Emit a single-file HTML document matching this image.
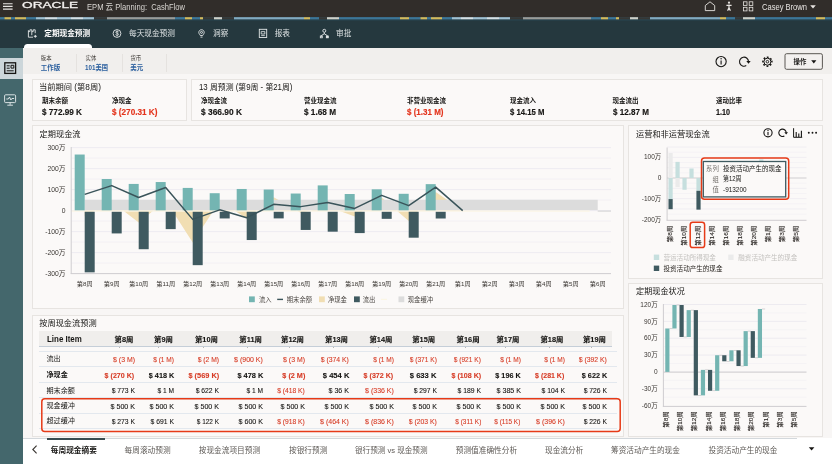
<!DOCTYPE html>
<html lang="zh-CN">
<head>
<meta charset="utf-8">
<title>EPM 云 Planning: CashFlow</title>
<style>
*{box-sizing:border-box;margin:0;padding:0}
html,body{width:832px;height:464px;overflow:hidden;background:#f8f6f5}
body{font-family:"Liberation Sans","Noto Sans CJK SC",sans-serif;color:#161513}
#root{position:relative;width:832px;height:464px;overflow:hidden;background:#f8f6f5;will-change:transform}
.abs{position:absolute}
.t{position:absolute;white-space:nowrap;line-height:1}
svg{position:absolute;left:0;top:0;overflow:visible}
svg text{font-family:"Liberation Sans","Noto Sans CJK SC",sans-serif}
.card{position:absolute;background:#fbf9f8;border:1px solid #e7e4e1}

</style>
</head>
<body>
<div id="root">
<div class="abs" style="left:0;top:0;width:832px;height:18px;background:#312d2a"></div>
<div class="abs" style="left:0;top:20px;width:832px;height:28px;background:#25383e"></div>
<div class="abs" style="left:0;top:47.500px;width:832px;height:26.800px;background:#f1efed"></div>
<div class="abs" style="left:0;top:47.500px;width:23.100px;height:416.500px;background:#44676c"></div>
<div class="abs" style="left:0;top:58px;width:23.100px;height:21.200px;background:#ccd6da"></div>
<div class="abs" style="left:23.700px;top:43.600px;width:68.400px;height:4.200px;background:#fff;border-radius:3.500px 3.500px 0 0"></div>
<svg width="832" height="464" viewBox="0 0 832 464"><rect x="0" y="17.100" width="832" height="3.200" fill="#2f5566"/><g opacity=".88"><rect x="0" y="17.200" width="4.5" height="2.300" fill="#3f7b9f"/><rect x="4.5" y="17.200" width="6.5" height="2.300" fill="#ecc85a"/><rect x="11" y="17.200" width="4" height="2.300" fill="#3f7b9f"/><rect x="15" y="17.200" width="11" height="2.300" fill="#ecc85a"/><rect x="26" y="17.200" width="10" height="2.300" fill="#3f7b9f"/><rect x="36" y="17.200" width="9" height="2.300" fill="#b2d0e2"/><rect x="45" y="17.200" width="12" height="2.300" fill="#eef3f6"/><rect x="57" y="17.200" width="14" height="2.300" fill="#b2d0e2"/><rect x="71" y="17.200" width="12" height="2.300" fill="#eef3f6"/><rect x="83" y="17.200" width="11" height="2.300" fill="#b2d0e2"/><rect x="94" y="17.200" width="13" height="2.300" fill="#37332f"/><rect x="107" y="17.200" width="68" height="2.300" fill="#aba6a0"/><rect x="175" y="17.200" width="10" height="2.300" fill="#3f7b9f"/><rect x="185" y="17.200" width="7" height="2.300" fill="#ecc85a"/><rect x="192" y="17.200" width="8" height="2.300" fill="#3f7b9f"/><rect x="200" y="17.200" width="3" height="2.300" fill="#ecc85a"/><rect x="203" y="17.200" width="11" height="2.300" fill="#37332f"/><rect x="214" y="17.200" width="8" height="2.300" fill="#e6e1d6"/><rect x="222" y="17.200" width="12" height="2.300" fill="#37332f"/><rect x="234" y="17.200" width="70" height="2.300" fill="#8fb6cd"/><rect x="304" y="17.200" width="6" height="2.300" fill="#ecc85a"/><rect x="310" y="17.200" width="9" height="2.300" fill="#3f7b9f"/><rect x="319" y="17.200" width="8" height="2.300" fill="#37332f"/><rect x="327" y="17.200" width="12" height="2.300" fill="#e6e1d6"/><rect x="339" y="17.200" width="61" height="2.300" fill="#3f7b9f"/><rect x="400" y="17.200" width="9" height="2.300" fill="#ecc85a"/><rect x="409" y="17.200" width="7" height="2.300" fill="#3f7b9f"/><rect x="416" y="17.200" width="4.5" height="2.300" fill="#3f7b9f"/><rect x="420.5" y="17.200" width="6.5" height="2.300" fill="#ecc85a"/><rect x="427" y="17.200" width="4" height="2.300" fill="#3f7b9f"/><rect x="431" y="17.200" width="11" height="2.300" fill="#ecc85a"/><rect x="442" y="17.200" width="10" height="2.300" fill="#3f7b9f"/><rect x="452" y="17.200" width="9" height="2.300" fill="#b2d0e2"/><rect x="461" y="17.200" width="12" height="2.300" fill="#eef3f6"/><rect x="473" y="17.200" width="14" height="2.300" fill="#b2d0e2"/><rect x="487" y="17.200" width="12" height="2.300" fill="#eef3f6"/><rect x="499" y="17.200" width="11" height="2.300" fill="#b2d0e2"/><rect x="510" y="17.200" width="13" height="2.300" fill="#37332f"/><rect x="523" y="17.200" width="68" height="2.300" fill="#aba6a0"/><rect x="591" y="17.200" width="10" height="2.300" fill="#3f7b9f"/><rect x="601" y="17.200" width="7" height="2.300" fill="#ecc85a"/><rect x="608" y="17.200" width="8" height="2.300" fill="#3f7b9f"/><rect x="616" y="17.200" width="3" height="2.300" fill="#ecc85a"/><rect x="619" y="17.200" width="11" height="2.300" fill="#37332f"/><rect x="630" y="17.200" width="8" height="2.300" fill="#e6e1d6"/><rect x="638" y="17.200" width="12" height="2.300" fill="#37332f"/><rect x="650" y="17.200" width="70" height="2.300" fill="#8fb6cd"/><rect x="720" y="17.200" width="6" height="2.300" fill="#ecc85a"/><rect x="726" y="17.200" width="9" height="2.300" fill="#3f7b9f"/><rect x="735" y="17.200" width="8" height="2.300" fill="#37332f"/><rect x="743" y="17.200" width="12" height="2.300" fill="#e6e1d6"/><rect x="755" y="17.200" width="61" height="2.300" fill="#3f7b9f"/><rect x="816" y="17.200" width="9" height="2.300" fill="#ecc85a"/><rect x="825" y="17.200" width="7" height="2.300" fill="#3f7b9f"/></g><rect x="0" y="19.300" width="832" height="1" fill="#25383e" opacity=".5"/></svg>
<div class="t" style="font-size:9.3px;top:1.15px;color:#f4f2f0;left:21.60px;transform:scaleX(1.470);transform-origin:0 50%;-webkit-text-stroke:.3px #f4f2f0;">ORACLE</div>
<div class="t" style="font-size:8.8px;top:3.00px;color:#d8d5d1;left:87.00px;transform:scaleX(0.864);transform-origin:0 50%;">EPM 云 Planning:&nbsp; CashFlow</div>
<div class="t" style="font-size:8.6px;top:2.60px;color:#e8e5e2;left:762.00px;transform:scaleX(0.880);transform-origin:0 50%;">Casey Brown</div>
<svg width="832" height="464" viewBox="0 0 832 464" fill="none" stroke="#e8e5e2" stroke-width="1">
  <path d="M3 3.700h9.600M3 6.400h9.600M3 9.100h9.600" stroke-width="1.100"/>
  <path d="M705.300 10.600V5.500l4.700-3.700 4.700 3.700v5.100z" stroke-width=".9"/>
  <circle cx="729" cy="2.700" r="1.100" fill="#e8e5e2" stroke="none"/>
  <path d="M726.400 5.300h5.200M729 4.600v3M727.600 10.700l1.400-3.200 1.400 3.200" stroke-width="1.200"/>
  <rect x="743.400" y="1.800" width="3.600" height="3.600" stroke-width=".8"/><rect x="749.200" y="1.800" width="3.600" height="3.600" stroke-width=".8"/>
  <rect x="743.400" y="7.300" width="3.600" height="3.600" stroke-width=".8"/><rect x="749.200" y="7.300" width="3.600" height="3.600" stroke-width=".8"/>
  <path d="M810.200 5.300h5.600l-2.800 3.200z" fill="#e8e5e2" stroke="none"/>
</svg>
<div class="t" style="font-size:7.65px;top:30.28px;font-weight:bold;color:#fff;left:44.30px;">定期现金预测</div>
<div class="t" style="font-size:7.65px;top:30.28px;color:#dde2e3;left:129.00px;">每天现金预测</div>
<div class="t" style="font-size:7.65px;top:30.28px;color:#dde2e3;left:213.10px;">洞察</div>
<div class="t" style="font-size:7.65px;top:30.28px;color:#dde2e3;left:274.70px;">报表</div>
<div class="t" style="font-size:7.65px;top:30.28px;color:#dde2e3;left:336.00px;">审批</div>
<svg width="832" height="464" viewBox="0 0 832 464" fill="none" stroke="#e4e8e9" stroke-width=".9">
  <path d="M28.400 30.200v7h4.600M28.400 31.600h1.500v-1.800h1.900v5.400M31.800 31.600h1.400v-1.800h2v3.400" />
  <path d="M33.800 36.300h3M35.300 34.900v2.800" stroke-width="1"/>
  <circle cx="117" cy="33.500" r="3.900"/>
  <path d="M118.600 32c-.4-.9-2.800-1-2.900.2s2.900.8 2.900 2.100-2.600 1.300-3.100.2M117.100 30.500v5.800" stroke-width=".8"/>
  <path d="M201.500 29.700c-1.500 0-2.700 1.200-2.700 2.700 0 1.300 1 2 1.500 3.100h2.400c.5-1.100 1.500-1.800 1.500-3.100 0-1.500-1.200-2.700-2.700-2.700zM200.500 37.100h2"/>
  <circle cx="201.500" cy="32.400" r="1"/>
  <rect x="259.300" y="29.300" width="7.400" height="8.200"/>
  <path d="M261.200 31.600h3.600v2.400h-3.600zM261.200 35.600h3.600" stroke-width=".8"/>
  <circle cx="324.300" cy="30.800" r="1.500"/>
  <path d="M324.300 32.400v1.600M321.300 37.200v-1.600l3-1.800 3 1.800v1.600"/>
  <rect x="320.300" y="36" width="2" height="1.800" stroke-width=".8"/><rect x="326.300" y="36" width="2" height="1.800" fill="#e4e8e9" stroke-width=".8"/>
</svg>
<svg width="832" height="464" viewBox="0 0 832 464" fill="none" stroke="#161513" stroke-width="1">
  <rect x="4.800" y="62.800" width="10.800" height="10.600" stroke-width="1.300"/>
  <path d="M6.700 65.800h3M6.700 68.200h3M6.700 70.800h7M11 65.300h2.800v2.800h-2.800z" stroke-width="1"/>
  <g stroke="#e9eeef" stroke-width=".9">
  <rect x="4.600" y="94.800" width="11" height="7.800" rx="1"/>
  <path d="M6.300 99h2l1.200-2 1.400 3 1-1.500h2.200M10.100 102.600v2.200M7.300 105.200h5.600"/>
  </g>
</svg>
<div class="abs" style="left:76.2px;top:54px;width:1px;height:17.500px;background:#e5e2df"></div>
<div class="abs" style="left:121.7px;top:54px;width:1px;height:17.500px;background:#e5e2df"></div>
<div class="abs" style="left:166.2px;top:54px;width:1px;height:17.500px;background:#e5e2df"></div>
<div class="t" style="font-size:5.35px;top:55.83px;color:#3a3632;left:40.80px;">版本</div>
<div class="t" style="font-size:6.45px;top:64.88px;font-weight:bold;color:#2b5f9e;left:40.80px;">工作版</div>
<div class="t" style="font-size:5.35px;top:55.83px;color:#3a3632;left:85.60px;">实体</div>
<div class="t" style="font-size:6.45px;top:64.88px;font-weight:bold;color:#2b5f9e;left:85.00px;transform:scaleX(0.974);transform-origin:0 50%;">101美国</div>
<div class="t" style="font-size:5.35px;top:55.83px;color:#3a3632;left:130.40px;">货币</div>
<div class="t" style="font-size:6.45px;top:64.88px;font-weight:bold;color:#2b5f9e;left:130.20px;">美元</div>
<svg width="832" height="464" viewBox="0 0 832 464" fill="none" stroke="#161513" stroke-width="1">
  <circle cx="721.100" cy="61.600" r="5.100" stroke-width="1.100"/>
  <path d="M721.100 60.400v4.200" stroke-width="1.100"/><circle cx="721.100" cy="58.700" r=".7" fill="#161513" stroke="none"/>
  <path d="M748.500 61.700a4.500 4.500 0 1 0 -2.250 3.900" stroke-width="1.150"/>
  <path d="M746.300 61.100h4.400l-2.200 2.700z" fill="#161513" stroke="none"/>
  <circle cx="767.400" cy="61.700" r="4.500" stroke-width="1.500" stroke-dasharray="1.800 1.734" transform="rotate(-14 767.400 61.700)"/>
  <circle cx="767.400" cy="61.700" r="3.500" stroke-width="1"/>
  <circle cx="767.400" cy="61.700" r="1.300" stroke-width=".9"/>
  <rect x="785" y="53.700" width="37.400" height="15.600" rx="1.600" fill="#f3f1ef" stroke="#4a4642" stroke-width=".9"/>
  <path d="M811.200 60.200h5.200l-2.600 3.400z" fill="#161513" stroke="none"/>
</svg>
<div class="t" style="font-size:6.4px;top:58.90px;font-weight:bold;left:793.60px;">操作</div>
<div class="card" style="left:32.100px;top:78.5px;width:154.900px;height:42.500px"></div>
<div class="card" style="left:191.200px;top:78.5px;width:631.600px;height:42.500px"></div>
<div class="t" style="font-size:8.2px;top:83.80px;left:39.30px;transform:scaleX(1.009);transform-origin:0 50%;">当前期间 (第8周)</div>
<div class="t" style="font-size:8.2px;top:83.80px;left:198.70px;transform:scaleX(0.960);transform-origin:0 50%;">13 周预测 (第9周 - 第21周)</div>
<div class="t" style="font-size:6.5px;top:97.55px;font-weight:bold;left:42.00px;">期末余额</div>
<div class="t" style="font-size:8.8px;top:108.00px;font-weight:bold;color:#161513;left:42.00px;transform:scaleX(0.929);transform-origin:0 50%;-webkit-text-stroke:.15px #161513;">$ 772.99 K</div>
<div class="t" style="font-size:6.5px;top:97.55px;font-weight:bold;left:112.00px;">净现金</div>
<div class="t" style="font-size:8.8px;top:108.00px;font-weight:bold;color:#e3331b;left:112.00px;transform:scaleX(0.930);transform-origin:0 50%;-webkit-text-stroke:.15px #e3331b;">$ (270.31 K)</div>
<div class="t" style="font-size:6.5px;top:97.55px;font-weight:bold;left:201.00px;">净现金流</div>
<div class="t" style="font-size:8.8px;top:108.00px;font-weight:bold;color:#161513;left:201.00px;transform:scaleX(0.952);transform-origin:0 50%;-webkit-text-stroke:.15px #161513;">$ 366.90 K</div>
<div class="t" style="font-size:6.5px;top:97.55px;font-weight:bold;left:304.00px;">营业现金流</div>
<div class="t" style="font-size:8.8px;top:108.00px;font-weight:bold;color:#161513;left:304.00px;transform:scaleX(0.935);transform-origin:0 50%;-webkit-text-stroke:.15px #161513;">$ 1.68 M</div>
<div class="t" style="font-size:6.5px;top:97.55px;font-weight:bold;left:407.00px;">非营业现金流</div>
<div class="t" style="font-size:8.8px;top:108.00px;font-weight:bold;color:#e3331b;left:407.00px;transform:scaleX(0.910);transform-origin:0 50%;-webkit-text-stroke:.15px #e3331b;">$ (1.31 M)</div>
<div class="t" style="font-size:6.5px;top:97.55px;font-weight:bold;left:510.00px;">现金流入</div>
<div class="t" style="font-size:8.8px;top:108.00px;font-weight:bold;color:#161513;left:510.00px;transform:scaleX(0.882);transform-origin:0 50%;-webkit-text-stroke:.15px #161513;">$ 14.15 M</div>
<div class="t" style="font-size:6.5px;top:97.55px;font-weight:bold;left:612.50px;">现金流出</div>
<div class="t" style="font-size:8.8px;top:108.00px;font-weight:bold;color:#161513;left:612.50px;transform:scaleX(0.920);transform-origin:0 50%;-webkit-text-stroke:.15px #161513;">$ 12.87 M</div>
<div class="t" style="font-size:6.5px;top:97.55px;font-weight:bold;left:716.00px;">速动比率</div>
<div class="t" style="font-size:8.8px;top:108.00px;font-weight:bold;color:#161513;left:716.00px;transform:scaleX(0.818);transform-origin:0 50%;-webkit-text-stroke:.15px #161513;">1.10</div>
<div class="card" style="left:32.100px;top:125.200px;width:592px;height:184.300px"></div>
<div class="t" style="font-size:8.2px;top:130.60px;left:39.60px;">定期现金流</div>
<svg width="832" height="464" viewBox="0 0 832 464">
<rect x="71.2" y="262.60" width="539.8" height="1" fill="#f3f1f4"/>
<rect x="71.2" y="252.10" width="539.8" height="1" fill="#eeecf1"/>
<rect x="71.2" y="241.60" width="539.8" height="1" fill="#f3f1f4"/>
<rect x="71.2" y="231.10" width="539.8" height="1" fill="#eeecf1"/>
<rect x="71.2" y="220.60" width="539.8" height="1" fill="#f3f1f4"/>
<rect x="71.2" y="210.10" width="539.8" height="1" fill="#eeecf1"/>
<rect x="71.2" y="199.60" width="539.8" height="1" fill="#f3f1f4"/>
<rect x="71.2" y="189.10" width="539.8" height="1" fill="#eeecf1"/>
<rect x="71.2" y="178.60" width="539.8" height="1" fill="#f3f1f4"/>
<rect x="71.2" y="168.10" width="539.8" height="1" fill="#eeecf1"/>
<rect x="71.2" y="157.60" width="539.8" height="1" fill="#f3f1f4"/>
<rect x="71.2" y="147.10" width="539.8" height="1" fill="#eeecf1"/>
<polygon points="84.7,210.60 84.7,216.27 111.7,201.82 138.7,222.55 165.7,200.56 192.7,242.48 219.7,201.07 246.7,218.41 273.7,197.31 300.7,212.87 327.7,206.48 354.7,216.50 381.7,197.54 408.7,220.89 435.7,192.04 462.7,210.60 489.7,210.60 516.7,210.60 543.7,210.60 570.7,210.60 597.7,210.60 597.7,210.60" fill="#f1deb3"/>
<rect x="84.7" y="199.80" width="513.0" height="10.30" fill="#dcdcdc"/>
<rect x="71.2" y="210.40" width="518.5" height="1.300" fill="#fbf6e4"/>
<rect x="597.7" y="210.60" width="13.3" height="1" fill="#d2d2d2"/>
<rect x="74.7" y="154.53" width="10" height="55.77" fill="#74b5b2"/>
<rect x="84.7" y="211.80" width="10" height="60.54" fill="#3f5a60"/>
<rect x="101.7" y="179.00" width="10" height="31.30" fill="#74b5b2"/>
<rect x="111.7" y="211.80" width="10" height="21.63" fill="#3f5a60"/>
<rect x="128.7" y="183.93" width="10" height="26.37" fill="#74b5b2"/>
<rect x="138.7" y="211.80" width="10" height="37.42" fill="#3f5a60"/>
<rect x="155.7" y="182.04" width="10" height="28.26" fill="#74b5b2"/>
<rect x="165.7" y="211.80" width="10" height="17.32" fill="#3f5a60"/>
<rect x="182.7" y="187.92" width="10" height="22.38" fill="#74b5b2"/>
<rect x="192.7" y="211.80" width="10" height="53.36" fill="#3f5a60"/>
<rect x="209.7" y="193.21" width="10" height="17.09" fill="#74b5b2"/>
<rect x="219.7" y="211.80" width="10" height="6.65" fill="#3f5a60"/>
<rect x="236.7" y="188.97" width="10" height="21.33" fill="#74b5b2"/>
<rect x="246.7" y="211.80" width="10" height="28.24" fill="#3f5a60"/>
<rect x="263.7" y="189.52" width="10" height="20.78" fill="#74b5b2"/>
<rect x="273.7" y="211.80" width="10" height="6.59" fill="#3f5a60"/>
<rect x="290.7" y="193.53" width="10" height="16.77" fill="#74b5b2"/>
<rect x="300.7" y="211.80" width="10" height="18.14" fill="#3f5a60"/>
<rect x="317.7" y="185.40" width="10" height="24.90" fill="#74b5b2"/>
<rect x="327.7" y="211.80" width="10" height="19.88" fill="#3f5a60"/>
<rect x="344.7" y="194.01" width="10" height="16.29" fill="#74b5b2"/>
<rect x="354.7" y="211.80" width="10" height="21.29" fill="#3f5a60"/>
<rect x="371.7" y="189.31" width="10" height="20.99" fill="#74b5b2"/>
<rect x="381.7" y="211.80" width="10" height="7.03" fill="#3f5a60"/>
<rect x="398.7" y="193.80" width="10" height="16.50" fill="#74b5b2"/>
<rect x="408.7" y="211.80" width="10" height="25.89" fill="#3f5a60"/>
<rect x="425.7" y="184.14" width="10" height="26.16" fill="#74b5b2"/>
<rect x="435.7" y="211.80" width="10" height="6.70" fill="#3f5a60"/>
<polyline points="84.7,194.37 111.7,185.59 138.7,197.54 165.7,187.50 192.7,219.38 219.7,209.84 246.7,217.66 273.7,204.36 300.7,206.63 327.7,202.51 354.7,208.42 381.7,195.35 408.7,205.64 435.7,187.08 462.7,210.60" fill="none" stroke="#3a545a" stroke-width="1.500" stroke-linejoin="round"/>
<rect x="70.7" y="147" width="1" height="127" fill="#cfcdd0"/>
<rect x="70.7" y="273.100" width="540.3" height="1" fill="#cfcdd0"/>
<rect x="249" y="296.400" width="5.800" height="5.800" fill="#74b5b2"/>
<rect x="277.200" y="298.700" width="5.800" height="1.400" fill="#3a545a"/>
<rect x="319" y="296.400" width="5.800" height="5.800" fill="#f1deb3"/>
<rect x="354" y="296.400" width="5.800" height="5.800" fill="#3f5a60"/>
<rect x="381" y="298.800" width="6" height="1.200" fill="#fbf6e4"/>
<rect x="398.500" y="296.400" width="5.800" height="5.800" fill="#dcdcdc"/>
</svg>
<div class="t" style="font-size:6.75px;top:144.82px;color:#3a3632;right:766.40px;">300万</div>
<div class="t" style="font-size:6.75px;top:165.82px;color:#3a3632;right:766.40px;">200万</div>
<div class="t" style="font-size:6.75px;top:186.82px;color:#3a3632;right:766.40px;">100万</div>
<div class="t" style="font-size:6.75px;top:207.52px;color:#3a3632;right:766.40px;">0</div>
<div class="t" style="font-size:6.75px;top:228.82px;color:#3a3632;right:766.40px;">-100万</div>
<div class="t" style="font-size:6.75px;top:249.82px;color:#3a3632;right:766.40px;">-200万</div>
<div class="t" style="font-size:6.75px;top:270.83px;color:#3a3632;right:766.40px;">-300万</div>
<div class="t" style="font-size:6.2px;top:280.80px;color:#3a3632;left:84.70px;transform:translateX(-50%);">第8周</div>
<div class="t" style="font-size:6.2px;top:280.80px;color:#3a3632;left:111.70px;transform:translateX(-50%);">第9周</div>
<div class="t" style="font-size:6.2px;top:280.80px;color:#3a3632;left:138.70px;transform:translateX(-50%);">第10周</div>
<div class="t" style="font-size:6.2px;top:280.80px;color:#3a3632;left:165.70px;transform:translateX(-50%);">第11周</div>
<div class="t" style="font-size:6.2px;top:280.80px;color:#3a3632;left:192.70px;transform:translateX(-50%);">第12周</div>
<div class="t" style="font-size:6.2px;top:280.80px;color:#3a3632;left:219.70px;transform:translateX(-50%);">第13周</div>
<div class="t" style="font-size:6.2px;top:280.80px;color:#3a3632;left:246.70px;transform:translateX(-50%);">第14周</div>
<div class="t" style="font-size:6.2px;top:280.80px;color:#3a3632;left:273.70px;transform:translateX(-50%);">第15周</div>
<div class="t" style="font-size:6.2px;top:280.80px;color:#3a3632;left:300.70px;transform:translateX(-50%);">第16周</div>
<div class="t" style="font-size:6.2px;top:280.80px;color:#3a3632;left:327.70px;transform:translateX(-50%);">第17周</div>
<div class="t" style="font-size:6.2px;top:280.80px;color:#3a3632;left:354.70px;transform:translateX(-50%);">第18周</div>
<div class="t" style="font-size:6.2px;top:280.80px;color:#3a3632;left:381.70px;transform:translateX(-50%);">第19周</div>
<div class="t" style="font-size:6.2px;top:280.80px;color:#3a3632;left:408.70px;transform:translateX(-50%);">第20周</div>
<div class="t" style="font-size:6.2px;top:280.80px;color:#3a3632;left:435.70px;transform:translateX(-50%);">第21周</div>
<div class="t" style="font-size:6.2px;top:280.80px;color:#3a3632;left:462.70px;transform:translateX(-50%);">第1周</div>
<div class="t" style="font-size:6.2px;top:280.80px;color:#3a3632;left:489.70px;transform:translateX(-50%);">第2周</div>
<div class="t" style="font-size:6.2px;top:280.80px;color:#3a3632;left:516.70px;transform:translateX(-50%);">第3周</div>
<div class="t" style="font-size:6.2px;top:280.80px;color:#3a3632;left:543.70px;transform:translateX(-50%);">第4周</div>
<div class="t" style="font-size:6.2px;top:280.80px;color:#3a3632;left:570.70px;transform:translateX(-50%);">第5周</div>
<div class="t" style="font-size:6.2px;top:280.80px;color:#3a3632;left:597.70px;transform:translateX(-50%);">第6周</div>
<div class="t" style="font-size:6.3px;top:296.75px;color:#4a4642;left:259.00px;">流入</div>
<div class="t" style="font-size:6.3px;top:296.75px;color:#4a4642;left:286.80px;">期末余额</div>
<div class="t" style="font-size:6.3px;top:296.75px;color:#4a4642;left:328.00px;">净现金</div>
<div class="t" style="font-size:6.3px;top:296.75px;color:#4a4642;left:362.80px;">流出</div>
<div class="t" style="font-size:6.3px;top:296.75px;color:#4a4642;left:407.80px;">现金缓冲</div>
<div class="card" style="left:628.200px;top:125.200px;width:194.400px;height:153.400px"></div>
<div class="t" style="font-size:8.2px;top:130.60px;left:636.00px;">运营和非运营现金流</div>
<svg width="832" height="464" viewBox="0 0 832 464">
<rect x="667.1" y="213.64" width="139.4" height="1" fill="#f5f3f5"/>
<rect x="667.1" y="208.47" width="139.4" height="1" fill="#f0eef2"/>
<rect x="667.1" y="203.31" width="139.4" height="1" fill="#f5f3f5"/>
<rect x="667.1" y="198.15" width="139.4" height="1" fill="#f0eef2"/>
<rect x="667.1" y="192.99" width="139.4" height="1" fill="#f5f3f5"/>
<rect x="667.1" y="187.82" width="139.4" height="1" fill="#f0eef2"/>
<rect x="667.1" y="182.66" width="139.4" height="1" fill="#f5f3f5"/>
<rect x="667.1" y="172.34" width="139.4" height="1" fill="#f5f3f5"/>
<rect x="667.1" y="167.18" width="139.4" height="1" fill="#f0eef2"/>
<rect x="667.1" y="162.01" width="139.4" height="1" fill="#f5f3f5"/>
<rect x="667.1" y="156.85" width="139.4" height="1" fill="#f0eef2"/>
<rect x="667.1" y="151.69" width="139.4" height="1" fill="#f5f3f5"/>
<rect x="667.1" y="146.53" width="139.4" height="1" fill="#f0eef2"/>
<rect x="667.1" y="177.50" width="139.4" height="1" fill="#cfcdd0"/>
<rect x="668.49" y="153.01" width="4.2" height="24.99" fill="#ebebeb"/>
<rect x="668.49" y="178.00" width="4.2" height="21.06" fill="#c6dfde"/>
<rect x="668.49" y="199.06" width="4.2" height="10.12" fill="#3f5a60"/>
<rect x="675.47" y="161.89" width="4.2" height="16.11" fill="#c6dfde"/>
<rect x="675.47" y="178.00" width="4.2" height="9.09" fill="#ebebeb"/>
<rect x="682.45" y="178.00" width="4.2" height="11.77" fill="#c6dfde"/>
<rect x="689.43" y="168.50" width="4.2" height="9.50" fill="#c6dfde"/>
<rect x="696.41" y="178.00" width="4.2" height="12.80" fill="#c6dfde"/>
<rect x="696.41" y="190.80" width="4.2" height="18.85" fill="#3f5a60"/>
<rect x="703.39" y="167.68" width="4.2" height="10.32" fill="#c6dfde"/>
<rect x="710.37" y="163.55" width="4.2" height="14.45" fill="#c6dfde"/>
<rect x="717.35" y="165.61" width="4.2" height="12.39" fill="#c6dfde"/>
<rect x="724.33" y="168.71" width="4.2" height="9.29" fill="#c6dfde"/>
<rect x="731.31" y="163.55" width="4.2" height="14.45" fill="#c6dfde"/>
<rect x="738.29" y="167.68" width="4.2" height="10.32" fill="#c6dfde"/>
<rect x="745.27" y="163.55" width="4.2" height="14.45" fill="#c6dfde"/>
<rect x="752.25" y="166.64" width="4.2" height="11.36" fill="#c6dfde"/>
<rect x="759.23" y="159.41" width="4.2" height="18.59" fill="#c6dfde"/>
<rect x="666.6" y="147.500" width="1" height="73" fill="#cfcdd0"/>
<rect x="666.6" y="219.800" width="139.9" height="1" fill="#cfcdd0"/>
<text transform="translate(669.89,225.700) rotate(-90) scale(1.080,1)" text-anchor="end" font-size="6" fill="#2e2a27" stroke="#2e2a27" stroke-width=".120" dominant-baseline="central">第8周</text>
<text transform="translate(683.85,225.700) rotate(-90) scale(1.080,1)" text-anchor="end" font-size="6" fill="#2e2a27" stroke="#2e2a27" stroke-width=".120" dominant-baseline="central">第10周</text>
<text transform="translate(697.81,225.700) rotate(-90) scale(1.080,1)" text-anchor="end" font-size="6" fill="#2e2a27" stroke="#2e2a27" stroke-width=".120" dominant-baseline="central">第12周</text>
<text transform="translate(711.77,225.700) rotate(-90) scale(1.080,1)" text-anchor="end" font-size="6" fill="#2e2a27" stroke="#2e2a27" stroke-width=".120" dominant-baseline="central">第14周</text>
<text transform="translate(725.73,225.700) rotate(-90) scale(1.080,1)" text-anchor="end" font-size="6" fill="#2e2a27" stroke="#2e2a27" stroke-width=".120" dominant-baseline="central">第16周</text>
<text transform="translate(739.69,225.700) rotate(-90) scale(1.080,1)" text-anchor="end" font-size="6" fill="#2e2a27" stroke="#2e2a27" stroke-width=".120" dominant-baseline="central">第18周</text>
<text transform="translate(753.65,225.700) rotate(-90) scale(1.080,1)" text-anchor="end" font-size="6" fill="#2e2a27" stroke="#2e2a27" stroke-width=".120" dominant-baseline="central">第20周</text>
<text transform="translate(767.61,225.700) rotate(-90) scale(1.080,1)" text-anchor="end" font-size="6" fill="#2e2a27" stroke="#2e2a27" stroke-width=".120" dominant-baseline="central">第1周</text>
<text transform="translate(781.57,225.700) rotate(-90) scale(1.080,1)" text-anchor="end" font-size="6" fill="#2e2a27" stroke="#2e2a27" stroke-width=".120" dominant-baseline="central">第3周</text>
<text transform="translate(795.53,225.700) rotate(-90) scale(1.080,1)" text-anchor="end" font-size="6" fill="#2e2a27" stroke="#2e2a27" stroke-width=".120" dominant-baseline="central">第5周</text>
<rect x="690.200" y="222.200" width="14.400" height="25.400" rx="2.600" fill="none" stroke="#e63a17" stroke-width="1.500"/>
<rect x="653.800" y="254.600" width="5.400" height="5.400" fill="#c6dfde"/>
<rect x="728.200" y="254.600" width="5.400" height="5.400" fill="#ebebeb"/>
<rect x="653.800" y="265.600" width="5.400" height="5.400" fill="#3f5a60"/>
<rect x="701.500" y="158" width="87.200" height="41.300" rx="3" fill="none" stroke="#e63a17" stroke-width="1.500"/>
<rect x="703.300" y="161.500" width="82.400" height="35.400" fill="#fbf9f8" stroke="#3f5a60" stroke-width="1.300"/>
<g fill="none" stroke="#161513" stroke-width="1">
  <circle cx="768" cy="132.800" r="4.100" stroke-width="1.100"/><path d="M768 132v3.200" stroke-width="1.100"/><circle cx="768" cy="130.500" r=".650" fill="#161513" stroke="none"/>
  <path d="M786.200 132.800a3.700 3.700 0 1 0 -1.850 3.200" stroke-width="1.100"/><path d="M784.300 132.300h3.700l-1.850 2.300z" fill="#161513" stroke="none"/>
  <path d="M793.600 128.200v9.100h8.600" stroke-width="1"/><path d="M796.200 137v-5M798.800 137v-3.400M801.400 137v-6.300" stroke-width="1.100"/>
  </g>
  <circle cx="808.800" cy="132.800" r=".95" fill="#161513"/><circle cx="812.500" cy="132.800" r=".95" fill="#161513"/><circle cx="816.100" cy="132.800" r=".95" fill="#161513"/>
</svg>
<div class="t" style="font-size:6.5px;top:154.20px;color:#3a3632;right:170.70px;">100万</div>
<div class="t" style="font-size:6.5px;top:174.55px;color:#3a3632;right:170.70px;">0</div>
<div class="t" style="font-size:6.5px;top:195.50px;color:#3a3632;right:170.70px;">-100万</div>
<div class="t" style="font-size:6.5px;top:217.05px;color:#3a3632;right:170.70px;">-200万</div>
<div class="t" style="font-size:6.56px;top:254.52px;color:#c4c2bf;left:663.50px;">营运活动所得现金</div>
<div class="t" style="font-size:6.56px;top:254.52px;color:#c4c2bf;left:738.30px;">融资活动产生的现金</div>
<div class="t" style="font-size:6.56px;top:265.52px;color:#2a2622;left:663.50px;">投资活动产生的现金</div>
<div class="t" style="font-size:6.4px;top:166.20px;color:#74706c;right:113.20px;">系列</div>
<div class="t" style="font-size:6.4px;top:176.50px;color:#74706c;right:113.20px;">组</div>
<div class="t" style="font-size:6.4px;top:186.90px;color:#74706c;right:113.20px;">值</div>
<div class="t" style="font-size:6.5px;top:166.15px;color:#161513;left:722.90px;">投资活动产生的现金</div>
<div class="t" style="font-size:6.5px;top:176.45px;color:#161513;left:722.90px;transform:scaleX(0.914);transform-origin:0 50%;">第12周</div>
<div class="t" style="font-size:6.5px;top:186.55px;color:#161513;left:722.90px;transform:scaleX(0.985);transform-origin:0 50%;">-913200</div>
<div class="card" style="left:628.200px;top:283.300px;width:194.400px;height:153.700px"></div>
<div class="t" style="font-size:8.15px;top:288.03px;left:636.00px;">定期现金状况</div>
<svg width="832" height="464" viewBox="0 0 832 464">
<rect x="663.4" y="396.67" width="143.1" height="1" fill="#f5f3f5"/>
<rect x="663.4" y="388.25" width="143.1" height="1" fill="#edebf0"/>
<rect x="663.4" y="379.82" width="143.1" height="1" fill="#f5f3f5"/>
<rect x="663.4" y="362.97" width="143.1" height="1" fill="#f5f3f5"/>
<rect x="663.4" y="354.55" width="143.1" height="1" fill="#edebf0"/>
<rect x="663.4" y="346.12" width="143.1" height="1" fill="#f5f3f5"/>
<rect x="663.4" y="337.70" width="143.1" height="1" fill="#edebf0"/>
<rect x="663.4" y="329.27" width="143.1" height="1" fill="#f5f3f5"/>
<rect x="663.4" y="320.85" width="143.1" height="1" fill="#edebf0"/>
<rect x="663.4" y="312.42" width="143.1" height="1" fill="#f5f3f5"/>
<rect x="663.4" y="304.00" width="143.1" height="1" fill="#edebf0"/>
<rect x="663.4" y="371.60" width="143.1" height="1" fill="#cbc9cc"/>
<rect x="665.26" y="328.48" width="4.2" height="43.42" fill="#74b5b2"/>
<rect x="669.46" y="328.18" width="3.12" height=".600" fill="#bdbbbd"/>
<rect x="672.38" y="305.01" width="4.2" height="23.48" fill="#74b5b2"/>
<rect x="676.58" y="304.71" width="3.12" height=".600" fill="#bdbbbd"/>
<rect x="679.50" y="305.01" width="4.2" height="31.96" fill="#3f5a60"/>
<rect x="683.70" y="336.66" width="3.12" height=".600" fill="#bdbbbd"/>
<rect x="686.62" y="310.12" width="4.2" height="26.85" fill="#74b5b2"/>
<rect x="690.82" y="309.82" width="3.12" height=".600" fill="#bdbbbd"/>
<rect x="693.74" y="310.12" width="4.2" height="85.26" fill="#3f5a60"/>
<rect x="697.94" y="395.08" width="3.12" height=".600" fill="#bdbbbd"/>
<rect x="700.86" y="369.88" width="4.2" height="25.50" fill="#74b5b2"/>
<rect x="705.06" y="369.58" width="3.12" height=".600" fill="#bdbbbd"/>
<rect x="707.98" y="369.88" width="4.2" height="20.89" fill="#3f5a60"/>
<rect x="712.18" y="390.47" width="3.12" height=".600" fill="#bdbbbd"/>
<rect x="715.10" y="355.22" width="4.2" height="35.55" fill="#74b5b2"/>
<rect x="719.30" y="354.92" width="3.12" height=".600" fill="#bdbbbd"/>
<rect x="722.22" y="355.22" width="4.2" height="6.07" fill="#3f5a60"/>
<rect x="726.42" y="360.98" width="3.12" height=".600" fill="#bdbbbd"/>
<rect x="729.34" y="350.28" width="4.2" height="11.01" fill="#74b5b2"/>
<rect x="733.54" y="349.98" width="3.12" height=".600" fill="#bdbbbd"/>
<rect x="736.46" y="350.28" width="4.2" height="15.78" fill="#3f5a60"/>
<rect x="740.66" y="365.76" width="3.12" height=".600" fill="#bdbbbd"/>
<rect x="743.58" y="331.12" width="4.2" height="34.94" fill="#74b5b2"/>
<rect x="747.78" y="330.82" width="3.12" height=".600" fill="#bdbbbd"/>
<rect x="750.70" y="331.12" width="4.2" height="26.74" fill="#3f5a60"/>
<rect x="754.90" y="357.56" width="3.12" height=".600" fill="#bdbbbd"/>
<rect x="757.82" y="308.99" width="4.2" height="48.87" fill="#74b5b2"/>
<rect x="762.02" y="308.69" width="3.12" height=".600" fill="#bdbbbd"/>
<rect x="662.9" y="304" width="1" height="103" fill="#cfcdd0"/>
<rect x="662.9" y="405.900" width="143.6" height="1" fill="#cfcdd0"/>
<text transform="translate(665.56,411.200) rotate(-90) scale(1.080,1)" text-anchor="end" font-size="6" fill="#2e2a27" stroke="#2e2a27" stroke-width=".120" dominant-baseline="central">第8周</text>
<text transform="translate(679.80,411.200) rotate(-90) scale(1.080,1)" text-anchor="end" font-size="6" fill="#2e2a27" stroke="#2e2a27" stroke-width=".120" dominant-baseline="central">第10周</text>
<text transform="translate(694.04,411.200) rotate(-90) scale(1.080,1)" text-anchor="end" font-size="6" fill="#2e2a27" stroke="#2e2a27" stroke-width=".120" dominant-baseline="central">第12周</text>
<text transform="translate(708.28,411.200) rotate(-90) scale(1.080,1)" text-anchor="end" font-size="6" fill="#2e2a27" stroke="#2e2a27" stroke-width=".120" dominant-baseline="central">第14周</text>
<text transform="translate(722.52,411.200) rotate(-90) scale(1.080,1)" text-anchor="end" font-size="6" fill="#2e2a27" stroke="#2e2a27" stroke-width=".120" dominant-baseline="central">第16周</text>
<text transform="translate(736.76,411.200) rotate(-90) scale(1.080,1)" text-anchor="end" font-size="6" fill="#2e2a27" stroke="#2e2a27" stroke-width=".120" dominant-baseline="central">第18周</text>
<text transform="translate(751.00,411.200) rotate(-90) scale(1.080,1)" text-anchor="end" font-size="6" fill="#2e2a27" stroke="#2e2a27" stroke-width=".120" dominant-baseline="central">第20周</text>
<text transform="translate(765.24,411.200) rotate(-90) scale(1.080,1)" text-anchor="end" font-size="6" fill="#2e2a27" stroke="#2e2a27" stroke-width=".120" dominant-baseline="central">第1周</text>
<text transform="translate(779.48,411.200) rotate(-90) scale(1.080,1)" text-anchor="end" font-size="6" fill="#2e2a27" stroke="#2e2a27" stroke-width=".120" dominant-baseline="central">第3周</text>
<text transform="translate(793.72,411.200) rotate(-90) scale(1.080,1)" text-anchor="end" font-size="6" fill="#2e2a27" stroke="#2e2a27" stroke-width=".120" dominant-baseline="central">第5周</text>
</svg>
<div class="t" style="font-size:6.5px;top:301.65px;color:#3a3632;right:174.30px;">120万</div>
<div class="t" style="font-size:6.5px;top:318.50px;color:#3a3632;right:174.30px;">90万</div>
<div class="t" style="font-size:6.5px;top:335.35px;color:#3a3632;right:174.30px;">60万</div>
<div class="t" style="font-size:6.5px;top:352.20px;color:#3a3632;right:174.30px;">30万</div>
<div class="t" style="font-size:6.5px;top:368.75px;color:#3a3632;right:174.30px;">0</div>
<div class="t" style="font-size:6.5px;top:385.90px;color:#3a3632;right:174.30px;">-30万</div>
<div class="t" style="font-size:6.5px;top:402.75px;color:#3a3632;right:174.30px;">-60万</div>
<div class="card" style="left:32.100px;top:314.500px;width:592px;height:122.500px"></div>
<div class="t" style="font-size:8.2px;top:319.60px;left:39.30px;">按周现金流预测</div>
<div class="abs" style="left:39.300px;top:331px;width:572.800px;height:15px;background:#f0eeec"></div>
<div class="abs" style="left:39.300px;top:345.800px;width:572.800px;height:1px;background:#c5ced8"></div>
<div class="abs" style="left:39.300px;top:350.9px;width:577.700px;height:1px;background:#e3e8ee"></div>
<div class="abs" style="left:39.300px;top:366.4px;width:577.700px;height:1px;background:#e3e8ee"></div>
<div class="abs" style="left:39.300px;top:381.9px;width:577.700px;height:1px;background:#e3e8ee"></div>
<div class="abs" style="left:39.300px;top:397.4px;width:577.700px;height:1px;background:#e3e8ee"></div>
<div class="abs" style="left:39.300px;top:412.9px;width:577.700px;height:1px;background:#e3e8ee"></div>
<div class="abs" style="left:39.300px;top:428.4px;width:577.700px;height:1px;background:#e3e8ee"></div>
<div class="t" style="font-size:8.3px;top:334.75px;font-weight:bold;left:46.80px;transform:scaleX(0.955);transform-origin:0 50%;">Line Item</div>
<div class="t" style="font-size:7.4px;top:335.60px;font-weight:bold;right:698.60px;-webkit-text-stroke:.12px #161513;">第8周</div>
<div class="abs" style="left:118.7px;top:346.800px;width:.800px;height:1.200px;background:#b9b6b3"></div>
<div class="t" style="font-size:7.4px;top:335.60px;font-weight:bold;right:659.10px;-webkit-text-stroke:.12px #161513;">第9周</div>
<div class="abs" style="left:158.2px;top:346.800px;width:.800px;height:1.200px;background:#b9b6b3"></div>
<div class="t" style="font-size:7.4px;top:335.60px;font-weight:bold;right:614.10px;-webkit-text-stroke:.12px #161513;">第10周</div>
<div class="abs" style="left:203.2px;top:346.800px;width:.800px;height:1.200px;background:#b9b6b3"></div>
<div class="t" style="font-size:7.4px;top:335.60px;font-weight:bold;right:570.10px;-webkit-text-stroke:.12px #161513;">第11周</div>
<div class="abs" style="left:247.2px;top:346.800px;width:.800px;height:1.200px;background:#b9b6b3"></div>
<div class="t" style="font-size:7.4px;top:335.60px;font-weight:bold;right:528.00px;-webkit-text-stroke:.12px #161513;">第12周</div>
<div class="abs" style="left:289.3px;top:346.800px;width:.800px;height:1.200px;background:#b9b6b3"></div>
<div class="t" style="font-size:7.4px;top:335.60px;font-weight:bold;right:484.00px;-webkit-text-stroke:.12px #161513;">第13周</div>
<div class="abs" style="left:333.3px;top:346.800px;width:.800px;height:1.200px;background:#b9b6b3"></div>
<div class="t" style="font-size:7.4px;top:335.60px;font-weight:bold;right:439.60px;-webkit-text-stroke:.12px #161513;">第14周</div>
<div class="abs" style="left:377.7px;top:346.800px;width:.800px;height:1.200px;background:#b9b6b3"></div>
<div class="t" style="font-size:7.4px;top:335.60px;font-weight:bold;right:396.80px;-webkit-text-stroke:.12px #161513;">第15周</div>
<div class="abs" style="left:420.5px;top:346.800px;width:.800px;height:1.200px;background:#b9b6b3"></div>
<div class="t" style="font-size:7.4px;top:335.60px;font-weight:bold;right:352.40px;-webkit-text-stroke:.12px #161513;">第16周</div>
<div class="abs" style="left:464.9px;top:346.800px;width:.800px;height:1.200px;background:#b9b6b3"></div>
<div class="t" style="font-size:7.4px;top:335.60px;font-weight:bold;right:312.60px;-webkit-text-stroke:.12px #161513;">第17周</div>
<div class="abs" style="left:504.7px;top:346.800px;width:.800px;height:1.200px;background:#b9b6b3"></div>
<div class="t" style="font-size:7.4px;top:335.60px;font-weight:bold;right:268.60px;-webkit-text-stroke:.12px #161513;">第18周</div>
<div class="abs" style="left:548.7px;top:346.800px;width:.800px;height:1.200px;background:#b9b6b3"></div>
<div class="t" style="font-size:7.4px;top:335.60px;font-weight:bold;right:226.10px;-webkit-text-stroke:.12px #161513;">第19周</div>
<div class="abs" style="left:591.2px;top:346.800px;width:.800px;height:1.200px;background:#b9b6b3"></div>
<div class="t" style="font-size:7.1px;top:356.45px;left:46.50px;">流出</div>
<div class="t" style="font-size:7.25px;top:356.07px;color:#d63b25;right:697.30px;transform:scaleX(0.952);transform-origin:100% 50%;-webkit-text-stroke:.1px #d63b25;">$ (3 M)</div>
<div class="t" style="font-size:7.25px;top:356.07px;color:#d63b25;right:657.80px;transform:scaleX(0.904);transform-origin:100% 50%;-webkit-text-stroke:.1px #d63b25;">$ (1 M)</div>
<div class="t" style="font-size:7.25px;top:356.07px;color:#d63b25;right:612.80px;transform:scaleX(0.926);transform-origin:100% 50%;-webkit-text-stroke:.1px #d63b25;">$ (2 M)</div>
<div class="t" style="font-size:7.25px;top:356.07px;color:#d63b25;right:568.80px;transform:scaleX(0.963);transform-origin:100% 50%;-webkit-text-stroke:.1px #d63b25;">$ (900 K)</div>
<div class="t" style="font-size:7.25px;top:356.07px;color:#d63b25;right:526.70px;transform:scaleX(0.952);transform-origin:100% 50%;-webkit-text-stroke:.1px #d63b25;">$ (3 M)</div>
<div class="t" style="font-size:7.25px;top:356.07px;color:#d63b25;right:482.70px;transform:scaleX(0.943);transform-origin:100% 50%;-webkit-text-stroke:.1px #d63b25;">$ (374 K)</div>
<div class="t" style="font-size:7.25px;top:356.07px;color:#d63b25;right:438.30px;transform:scaleX(0.904);transform-origin:100% 50%;-webkit-text-stroke:.1px #d63b25;">$ (1 M)</div>
<div class="t" style="font-size:7.25px;top:356.07px;color:#d63b25;right:395.50px;transform:scaleX(0.906);transform-origin:100% 50%;-webkit-text-stroke:.1px #d63b25;">$ (371 K)</div>
<div class="t" style="font-size:7.25px;top:356.07px;color:#d63b25;right:351.10px;transform:scaleX(0.906);transform-origin:100% 50%;-webkit-text-stroke:.1px #d63b25;">$ (921 K)</div>
<div class="t" style="font-size:7.25px;top:356.07px;color:#d63b25;right:311.30px;transform:scaleX(0.904);transform-origin:100% 50%;-webkit-text-stroke:.1px #d63b25;">$ (1 M)</div>
<div class="t" style="font-size:7.25px;top:356.07px;color:#d63b25;right:267.30px;transform:scaleX(0.904);transform-origin:100% 50%;-webkit-text-stroke:.1px #d63b25;">$ (1 M)</div>
<div class="t" style="font-size:7.25px;top:356.07px;color:#d63b25;right:224.80px;transform:scaleX(0.943);transform-origin:100% 50%;-webkit-text-stroke:.1px #d63b25;">$ (392 K)</div>
<div class="t" style="font-size:7.1px;top:371.95px;font-weight:bold;left:46.50px;">净现金</div>
<div class="t" style="font-size:7.25px;top:371.57px;font-weight:bold;color:#d63b25;right:697.30px;transform:scaleX(0.980);transform-origin:100% 50%;-webkit-text-stroke:.1px #d63b25;">$ (270 K)</div>
<div class="t" style="font-size:7.25px;top:371.57px;font-weight:bold;color:#161513;right:657.80px;-webkit-text-stroke:.1px #161513;">$ 418 K</div>
<div class="t" style="font-size:7.25px;top:371.57px;font-weight:bold;color:#d63b25;right:612.80px;transform:scaleX(1.020);transform-origin:100% 50%;-webkit-text-stroke:.1px #d63b25;">$ (569 K)</div>
<div class="t" style="font-size:7.25px;top:371.57px;font-weight:bold;color:#161513;right:568.80px;transform:scaleX(1.024);transform-origin:100% 50%;-webkit-text-stroke:.1px #161513;">$ 478 K</div>
<div class="t" style="font-size:7.25px;top:371.57px;font-weight:bold;color:#d63b25;right:526.70px;-webkit-text-stroke:.1px #d63b25;">$ (2 M)</div>
<div class="t" style="font-size:7.25px;top:371.57px;font-weight:bold;color:#161513;right:482.70px;transform:scaleX(1.047);transform-origin:100% 50%;-webkit-text-stroke:.1px #161513;">$ 454 K</div>
<div class="t" style="font-size:7.25px;top:371.57px;font-weight:bold;color:#d63b25;right:438.30px;transform:scaleX(0.980);transform-origin:100% 50%;-webkit-text-stroke:.1px #d63b25;">$ (372 K)</div>
<div class="t" style="font-size:7.25px;top:371.57px;font-weight:bold;color:#161513;right:395.50px;transform:scaleX(1.047);transform-origin:100% 50%;-webkit-text-stroke:.1px #161513;">$ 633 K</div>
<div class="t" style="font-size:7.25px;top:371.57px;font-weight:bold;color:#d63b25;right:351.10px;transform:scaleX(0.983);transform-origin:100% 50%;-webkit-text-stroke:.1px #d63b25;">$ (108 K)</div>
<div class="t" style="font-size:7.25px;top:371.57px;font-weight:bold;color:#161513;right:311.30px;-webkit-text-stroke:.1px #161513;">$ 196 K</div>
<div class="t" style="font-size:7.25px;top:371.57px;font-weight:bold;color:#d63b25;right:267.30px;transform:scaleX(0.964);transform-origin:100% 50%;-webkit-text-stroke:.1px #d63b25;">$ (281 K)</div>
<div class="t" style="font-size:7.25px;top:371.57px;font-weight:bold;color:#161513;right:224.80px;-webkit-text-stroke:.1px #161513;">$ 622 K</div>
<div class="t" style="font-size:7.1px;top:387.55px;left:46.50px;">期末余额</div>
<div class="t" style="font-size:7.25px;top:387.18px;color:#161513;right:697.30px;transform:scaleX(0.932);transform-origin:100% 50%;-webkit-text-stroke:.1px #161513;">$ 773 K</div>
<div class="t" style="font-size:7.25px;top:387.18px;color:#161513;right:657.80px;transform:scaleX(0.912);transform-origin:100% 50%;-webkit-text-stroke:.1px #161513;">$ 1 M</div>
<div class="t" style="font-size:7.25px;top:387.18px;color:#161513;right:612.80px;transform:scaleX(0.932);transform-origin:100% 50%;-webkit-text-stroke:.1px #161513;">$ 622 K</div>
<div class="t" style="font-size:7.25px;top:387.18px;color:#161513;right:568.80px;transform:scaleX(0.912);transform-origin:100% 50%;-webkit-text-stroke:.1px #161513;">$ 1 M</div>
<div class="t" style="font-size:7.25px;top:387.18px;color:#d63b25;right:526.70px;transform:scaleX(0.926);transform-origin:100% 50%;-webkit-text-stroke:.1px #d63b25;">$ (418 K)</div>
<div class="t" style="font-size:7.25px;top:387.18px;color:#161513;right:482.70px;transform:scaleX(0.976);transform-origin:100% 50%;-webkit-text-stroke:.1px #161513;">$ 36 K</div>
<div class="t" style="font-size:7.25px;top:387.18px;color:#d63b25;right:438.30px;transform:scaleX(0.963);transform-origin:100% 50%;-webkit-text-stroke:.1px #d63b25;">$ (336 K)</div>
<div class="t" style="font-size:7.25px;top:387.18px;color:#161513;right:395.50px;transform:scaleX(0.932);transform-origin:100% 50%;-webkit-text-stroke:.1px #161513;">$ 297 K</div>
<div class="t" style="font-size:7.25px;top:387.18px;color:#161513;right:351.10px;transform:scaleX(0.936);transform-origin:100% 50%;-webkit-text-stroke:.1px #161513;">$ 189 K</div>
<div class="t" style="font-size:7.25px;top:387.18px;color:#161513;right:311.30px;transform:scaleX(0.980);transform-origin:100% 50%;-webkit-text-stroke:.1px #161513;">$ 385 K</div>
<div class="t" style="font-size:7.25px;top:387.18px;color:#161513;right:267.30px;transform:scaleX(0.936);transform-origin:100% 50%;-webkit-text-stroke:.1px #161513;">$ 104 K</div>
<div class="t" style="font-size:7.25px;top:387.18px;color:#161513;right:224.80px;transform:scaleX(0.932);transform-origin:100% 50%;-webkit-text-stroke:.1px #161513;">$ 726 K</div>
<div class="t" style="font-size:7.1px;top:403.05px;left:46.50px;">现金缓冲</div>
<div class="t" style="font-size:7.25px;top:402.68px;color:#161513;right:697.30px;transform:scaleX(0.980);transform-origin:100% 50%;-webkit-text-stroke:.1px #161513;">$ 500 K</div>
<div class="t" style="font-size:7.25px;top:402.68px;color:#161513;right:657.80px;transform:scaleX(0.980);transform-origin:100% 50%;-webkit-text-stroke:.1px #161513;">$ 500 K</div>
<div class="t" style="font-size:7.25px;top:402.68px;color:#161513;right:612.80px;transform:scaleX(0.980);transform-origin:100% 50%;-webkit-text-stroke:.1px #161513;">$ 500 K</div>
<div class="t" style="font-size:7.25px;top:402.68px;color:#161513;right:568.80px;transform:scaleX(0.980);transform-origin:100% 50%;-webkit-text-stroke:.1px #161513;">$ 500 K</div>
<div class="t" style="font-size:7.25px;top:402.68px;color:#161513;right:526.70px;transform:scaleX(0.980);transform-origin:100% 50%;-webkit-text-stroke:.1px #161513;">$ 500 K</div>
<div class="t" style="font-size:7.25px;top:402.68px;color:#161513;right:482.70px;transform:scaleX(0.980);transform-origin:100% 50%;-webkit-text-stroke:.1px #161513;">$ 500 K</div>
<div class="t" style="font-size:7.25px;top:402.68px;color:#161513;right:438.30px;transform:scaleX(0.980);transform-origin:100% 50%;-webkit-text-stroke:.1px #161513;">$ 500 K</div>
<div class="t" style="font-size:7.25px;top:402.68px;color:#161513;right:395.50px;transform:scaleX(0.980);transform-origin:100% 50%;-webkit-text-stroke:.1px #161513;">$ 500 K</div>
<div class="t" style="font-size:7.25px;top:402.68px;color:#161513;right:351.10px;transform:scaleX(0.980);transform-origin:100% 50%;-webkit-text-stroke:.1px #161513;">$ 500 K</div>
<div class="t" style="font-size:7.25px;top:402.68px;color:#161513;right:311.30px;transform:scaleX(0.980);transform-origin:100% 50%;-webkit-text-stroke:.1px #161513;">$ 500 K</div>
<div class="t" style="font-size:7.25px;top:402.68px;color:#161513;right:267.30px;transform:scaleX(0.980);transform-origin:100% 50%;-webkit-text-stroke:.1px #161513;">$ 500 K</div>
<div class="t" style="font-size:7.25px;top:402.68px;color:#161513;right:224.80px;transform:scaleX(0.980);transform-origin:100% 50%;-webkit-text-stroke:.1px #161513;">$ 500 K</div>
<div class="t" style="font-size:7.1px;top:418.35px;left:46.50px;">超过缓冲</div>
<div class="t" style="font-size:7.25px;top:417.97px;color:#161513;right:697.30px;transform:scaleX(0.932);transform-origin:100% 50%;-webkit-text-stroke:.1px #161513;">$ 273 K</div>
<div class="t" style="font-size:7.25px;top:417.97px;color:#161513;right:657.80px;transform:scaleX(0.936);transform-origin:100% 50%;-webkit-text-stroke:.1px #161513;">$ 691 K</div>
<div class="t" style="font-size:7.25px;top:417.97px;color:#161513;right:612.80px;transform:scaleX(0.888);transform-origin:100% 50%;-webkit-text-stroke:.1px #161513;">$ 122 K</div>
<div class="t" style="font-size:7.25px;top:417.97px;color:#161513;right:568.80px;transform:scaleX(0.980);transform-origin:100% 50%;-webkit-text-stroke:.1px #161513;">$ 600 K</div>
<div class="t" style="font-size:7.25px;top:417.97px;color:#d63b25;right:526.70px;transform:scaleX(0.926);transform-origin:100% 50%;-webkit-text-stroke:.1px #d63b25;">$ (918 K)</div>
<div class="t" style="font-size:7.25px;top:417.97px;color:#d63b25;right:482.70px;transform:scaleX(0.963);transform-origin:100% 50%;-webkit-text-stroke:.1px #d63b25;">$ (464 K)</div>
<div class="t" style="font-size:7.25px;top:417.97px;color:#d63b25;right:438.30px;transform:scaleX(0.963);transform-origin:100% 50%;-webkit-text-stroke:.1px #d63b25;">$ (836 K)</div>
<div class="t" style="font-size:7.25px;top:417.97px;color:#d63b25;right:395.50px;transform:scaleX(0.943);transform-origin:100% 50%;-webkit-text-stroke:.1px #d63b25;">$ (203 K)</div>
<div class="t" style="font-size:7.25px;top:417.97px;color:#d63b25;right:351.10px;transform:scaleX(0.887);transform-origin:100% 50%;-webkit-text-stroke:.1px #d63b25;">$ (311 K)</div>
<div class="t" style="font-size:7.25px;top:417.97px;color:#d63b25;right:311.30px;transform:scaleX(0.887);transform-origin:100% 50%;-webkit-text-stroke:.1px #d63b25;">$ (115 K)</div>
<div class="t" style="font-size:7.25px;top:417.97px;color:#d63b25;right:267.30px;transform:scaleX(0.963);transform-origin:100% 50%;-webkit-text-stroke:.1px #d63b25;">$ (396 K)</div>
<div class="t" style="font-size:7.25px;top:417.97px;color:#161513;right:224.80px;transform:scaleX(0.932);transform-origin:100% 50%;-webkit-text-stroke:.1px #161513;">$ 226 K</div>
<svg width="832" height="464" viewBox="0 0 832 464"><rect x="41.800" y="398.800" width="578.400" height="32.800" rx="3" fill="none" stroke="#e63a17" stroke-width="1.500"/></svg>
<div class="abs" style="left:23.100px;top:437.700px;width:808.900px;height:26.300px;background:#fff"></div>
<div class="abs" style="left:23.100px;top:437.700px;width:774.400px;height:1px;background:#d3d8dc"></div>
<div class="abs" style="left:47.400px;top:437.600px;width:57.800px;height:2.700px;background:#3a4c50"></div>
<div class="t" style="font-size:7.68px;top:446.86px;font-weight:bold;color:#161513;left:50.80px;">每周现金摘要</div>
<div class="t" style="font-size:7.68px;top:446.86px;color:#5e5a56;left:124.60px;">每周滚动预测</div>
<div class="t" style="font-size:7.66px;top:446.87px;color:#5e5a56;left:198.80px;">按现金流项目预测</div>
<div class="t" style="font-size:7.66px;top:446.87px;color:#5e5a56;left:289.00px;">按银行预测</div>
<div class="t" style="font-size:7.66px;top:446.87px;color:#5e5a56;left:355.00px;transform:scaleX(0.991);transform-origin:0 50%;">银行预测 vs 现金预测</div>
<div class="t" style="font-size:7.66px;top:446.87px;color:#5e5a56;left:455.80px;">预测值准确性分析</div>
<div class="t" style="font-size:7.66px;top:446.87px;color:#5e5a56;left:545.00px;">现金流分析</div>
<div class="t" style="font-size:7.66px;top:446.87px;color:#5e5a56;left:611.00px;">筹资活动产生的现金</div>
<div class="t" style="font-size:7.66px;top:446.87px;color:#5e5a56;left:708.50px;">投资活动产生的现金</div>
<svg width="832" height="464" viewBox="0 0 832 464"><path d="M36.600 445.600l-3.800 3.900 3.800 3.900" fill="none" stroke="#3a3632" stroke-width="1.100"/>
<path d="M808.800 447.300h5.600l-2.800 3.200z" fill="#161513"/></svg>
</div>
</body>
</html>
